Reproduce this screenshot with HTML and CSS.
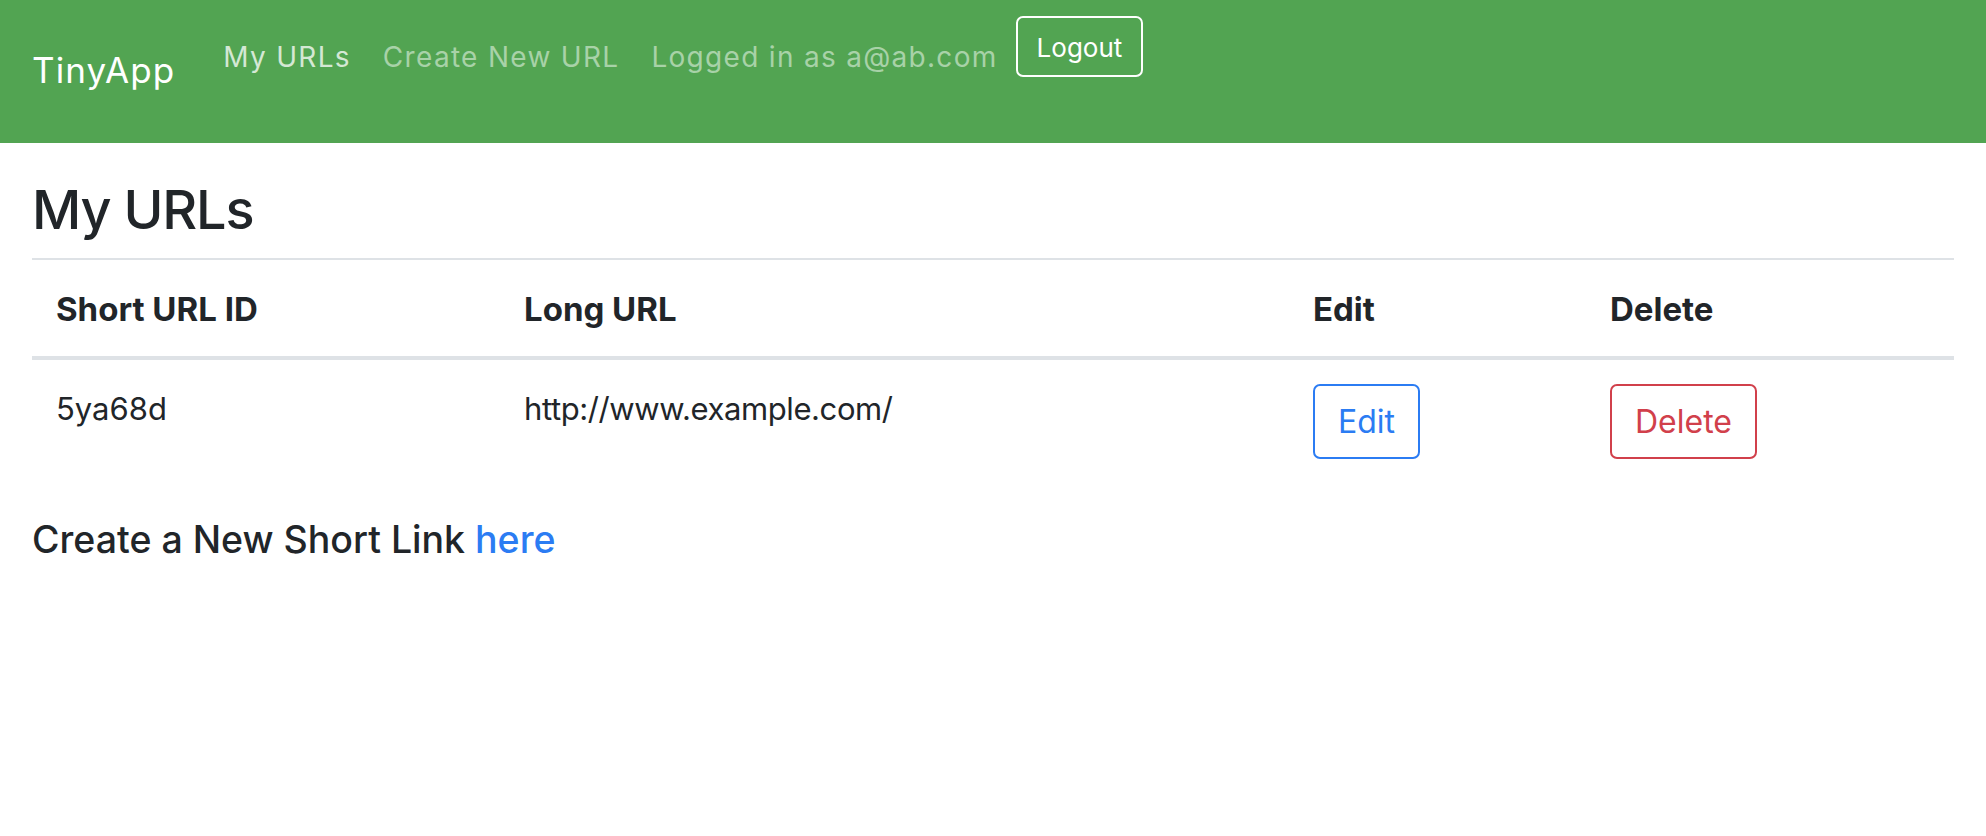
FILE: index.html
```html
<!DOCTYPE html>
<html lang="en">
<head>
<meta charset="utf-8">
<title>TinyApp</title>
<link rel="stylesheet" href="styles.css">
</head>
<body>
<nav class="navbar">
  <a class="brand" href="#">TinyApp</a>
  <a class="nav-link active" href="#">My URLs</a>
  <a class="nav-link" href="#">Create New URL</a>
  <span class="nav-link">Logged in as a@ab.com</span>
  <button class="logout" type="button">Logout</button>
</nav>
<main class="container">
  <h3 class="title">My URLs</h3>
  <table class="urls">
    <colgroup>
      <col class="c1"><col class="c2"><col class="c3"><col class="c4">
    </colgroup>
    <thead>
      <tr>
        <th class="first">Short URL ID</th>
        <th>Long URL</th>
        <th>Edit</th>
        <th>Delete</th>
      </tr>
    </thead>
    <tbody>
      <tr>
        <td class="first">5ya68d</td>
        <td class="long">http://www.example.com/</td>
        <td><a class="btn btn-blue" href="#">Edit</a></td>
        <td><button class="btn btn-red" type="button">Delete</button></td>
      </tr>
    </tbody>
  </table>
  <h4 class="create">Create a New Short Link <a href="#" class="link">here</a></h4>
</main>
</body>
</html>
```
FILE: styles.css
```css
* { box-sizing: border-box; }
html, body { margin: 0; padding: 0; }
body {
  font-family: Inter, "Noto Sans", "Liberation Sans", sans-serif;
  color: #212529;
  background: #fff;
}
.navbar {
  display: flex;
  align-items: flex-start;
  height: 143px;
  padding: 0 32px;
  background: #52a452;
}
.brand {
  font-size: 35px;
  letter-spacing: 1.1px;
  line-height: 1.2;
  color: #fff;
  text-decoration: none;
  margin-top: 49px;
  margin-right: 32px;
}
.nav-link {
  font-size: 28px;
  letter-spacing: 1.3px;
  line-height: 1.2;
  color: #a8d2a8;
  text-decoration: none;
  margin-top: 41px;
  padding: 0 16px;
}
.nav-link.active { color: #d4e8d4; }
.logout {
  margin-top: 16px;
  margin-left: 2px;
  font-family: inherit;
  font-size: 26px;
  line-height: 1.2;
  color: #fff;
  background: transparent;
  border: 2px solid #fff;
  border-radius: 7px;
  padding: 14px 19px 12px;
}
.container { padding: 0 32px; }
.title {
  font-size: 54px;
  letter-spacing: -1.2px;
  font-weight: 500;
  line-height: 1.2;
  margin: 35px 0 15px;
}
.urls {
  width: 100%;
  border-collapse: collapse;
  table-layout: fixed;
}
.c1 { width: 470px; }
.c2 { width: 789px; }
.c3 { width: 297px; }
.c4 { width: 366px; }
.urls th {
  text-align: left;
  font-size: 33px;
  font-weight: 700;
  line-height: 1.5;
  padding: 25px 22px 22px;
  border-top: 2px solid #dee2e6;
  border-bottom: 4px solid #dee2e6;
  vertical-align: bottom;
}
.urls td {
  font-size: 31px;
  line-height: 1.6;
  padding: 24px 22px;
  vertical-align: top;
}
.urls .first { padding-left: 24px; }
.urls .long { letter-spacing: -0.4px; }
.btn {
  display: inline-block;
  font-family: inherit;
  font-size: 32px;
  line-height: 1.5;
  padding: 12px 23px 11px;
  border: 2px solid;
  border-radius: 7px;
  background: transparent;
  text-decoration: none;
  vertical-align: top;
}
.btn-blue { color: #2b7cf3; border-color: #2b7cf3; }
.btn-red { color: #d1404b; border-color: #d1404b; }
.create {
  font-size: 37.5px;
  font-weight: 500;
  line-height: 1.2;
  margin: 34px 0 0;
}
.link { color: #2b7cf3; text-decoration: none; }
```
